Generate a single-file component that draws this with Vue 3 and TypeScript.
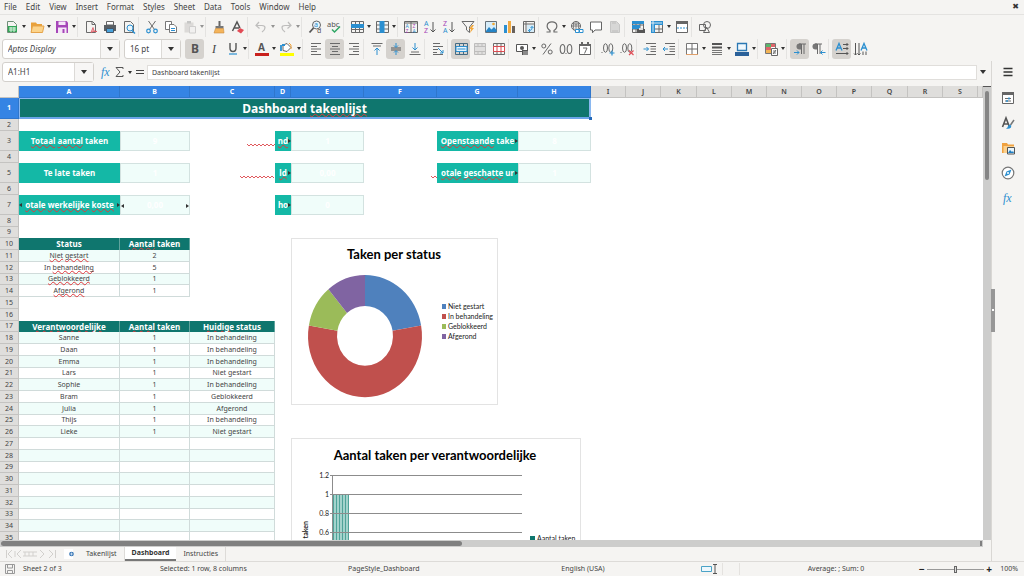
<script setup lang="ts">
import { ref } from 'vue'

interface Tool {
  id: string
  label: string
  menu?: boolean
  active?: boolean
  dim?: boolean
}
interface Cell {
  text: string
  kind: string
  spell?: boolean
  left?: boolean
  right?: boolean
  wave?: number
}

const menus = ['File', 'Edit', 'View', 'Insert', 'Format', 'Styles', 'Sheet', 'Data', 'Tools', 'Window', 'Help']

const t = (id: string, label: string, extra: Partial<Tool> = {}): Tool => ({ id, label, ...extra })
const drop = { menu: true }

const standardBar: Tool[][] = [
  [t('new', 'New', drop), t('open', 'Open', drop), t('save', 'Save', drop)],
  [t('pdf', 'Export as PDF'), t('print', 'Print'), t('preview', 'Print preview')],
  [t('cut', 'Cut'), t('copy', 'Copy'), t('paste', 'Paste', { menu: true, dim: true })],
  [t('brush', 'Clone formatting'), t('clear', 'Clear formatting')],
  [t('undo', 'Undo', { menu: true, dim: true }), t('redo', 'Redo', { menu: true, dim: true })],
  [t('find', 'Find and replace'), t('spell', 'Spelling')],
  [t('row', 'Row', drop), t('column', 'Column', drop)],
  [t('sort', 'Sort'), t('asc', 'Sort ascending'), t('desc', 'Sort descending'), t('filter', 'AutoFilter')],
  [t('image', 'Insert image'), t('chart', 'Insert chart'), t('pivot', 'Insert pivot table')],
  [t('omega', 'Special character', drop), t('link', 'Hyperlink'), t('comment', 'Comment'), t('headers', 'Headers and footers', { dim: true })],
  [t('area', 'Define print area'), t('freeze', 'Freeze rows and columns', drop), t('split', 'Split window')],
  [t('shapes', 'Draw functions')],
]

const formatBar: Tool[][] = [
  [t('bold', 'Bold', { active: true }), t('italic', 'Italic'), t('underline', 'Underline', drop)],
  [t('fontcolor', 'Font color', drop), t('highlight', 'Background color', drop)],
  [t('left', 'Align left'), t('center', 'Center', { active: true }), t('right', 'Align right')],
  [t('top', 'Align top'), t('middle', 'Center vertically', { active: true }), t('bottom', 'Align bottom')],
  [t('wrap', 'Wrap text')],
  [t('merge', 'Merge and center', { active: true }), t('mergecells', 'Merge cells', { dim: true }), t('unmerge', 'Unmerge cells')],
  [t('currency', 'Currency', drop), t('percent', 'Percent'), t('number', 'Number'), t('date', 'Date')],
  [t('adddec', 'Add decimal place'), t('deldec', 'Delete decimal place')],
  [t('indent', 'Increase indent'), t('outdent', 'Decrease indent')],
  [t('borders', 'Borders', drop), t('style', 'Border style', drop), t('bordercolor', 'Border color', drop)],
  [t('conditional', 'Conditional', drop)],
  [t('ltr', 'Left to right', { active: true }), t('rtl', 'Right to left')],
  [t('horiz', 'Text left to right', { active: true }), t('vert', 'Text top to bottom')],
]

const sideTools: Tool[] = [
  t('menu', 'Sidebar settings'),
  t('props', 'Properties'),
  t('styles', 'Styles'),
  t('gallery', 'Gallery'),
  t('navigator', 'Navigator'),
  t('fx', 'Functions'),
]

const g = '#6a6a6a'
const b = '#2b8fd0'
const line = (d: string, c = g, w = 1) => `<path d="${d}" fill="none" stroke="${c}" stroke-width="${w}"/>`
const glyph = (x: number, y: number, s: string, size: number, c = g, extra = '') =>
  `<text x="${x}" y="${y}" font-size="${size}" fill="${c}" ${extra}>${s}</text>`
const digits = `<g fill="none" stroke="${g}"><ellipse cx="4.5" cy="6" rx="2" ry="4.3"/><ellipse cx="9.8" cy="6" rx="2" ry="4.3"/></g><path d="M.5 10h1v1h-1z" fill="${g}"/>`
const page = 'M2.5 1.5H8.5L11.5 4.5V12.5H2.5Z'

const icons: Record<string, string> = {
  new: line(page, '#6f8f78') + '<path d="M3 6h9v6H3z" fill="#32a657"/><path d="M4 8h7M4 10h7M6 7v5M9 7v5" stroke="#d9f2df" fill="none"/>',
  open: '<path d="M1 2.5h5l1 1.5h5v8H1z" fill="#e9a13a"/><path d="M2.5 6H14l-1.500 6.5H1z" fill="#fcd48b" stroke="#e5a34a"/>',
  save: '<path d="M1 1h10.500L13 2.5V13H1z" fill="#a646b8"/><path d="M3.5 1.5h7V5h-7z" fill="#f5e6f8"/><path d="M3 7.5h8.500V13H3z" fill="#f5e6f8"/><path d="M7.5 9h2v4h-2z" fill="#a646b8"/>',
  pdf: line(page + 'M8 1.5V4.5H11') + '<path d="M7 12.500l2-5 1 3.500 3 .5-4 0z" fill="#f6b8bd" stroke="#dd5560" stroke-width=".8"/>',
  print: '<path d="M3.5 1.5h7V5h-7z" fill="#fff" stroke="#666"/><path d="M1 5h12v6H1z" fill="#5a5f63"/><path d="M3.5 8.5h7v4h-7z" fill="#4aa3dc" stroke="#456"/>',
  preview: line(page) + '<circle cx="8" cy="8" r="3" fill="#e7f5fd" stroke="#2b8fd0"/><path d="M10 10.500l3 3" stroke="#2b8fd0" stroke-width="1.5"/>',
  cut: line('M3.5 1L9.5 9.5M10.5 1L4.5 9.5') + '<circle cx="3.5" cy="11" r="1.8" fill="none" stroke="#2b8fd0" stroke-width="1.2"/><circle cx="10.5" cy="11" r="1.8" fill="none" stroke="#2b8fd0" stroke-width="1.2"/>',
  copy: '<path d="M1.5 1.5H7.5V9.5H1.5z" fill="#fff" stroke="#777"/><path d="M5.5 4.5H10L12.5 7V12.5H5.5z" fill="#fff" stroke="#777"/><path d="M7 8.5h4M7 10.5h4" stroke="#2b8fd0"/>',
  paste: '<path d="M1.5 2.5h9v10h-9z" fill="#c4c2bf"/><path d="M4 1h4v2.500H4z" fill="#999"/><path d="M6.5 6.5H12.5V13H6.5z" fill="#eee" stroke="#aaa"/>',
  brush: '<path d="M7.5 1v5" stroke="#666" stroke-width="2"/><path d="M3.5 6h8v2.500h-8z" fill="#777"/><path d="M3.5 8.5h8L12 13H2z" fill="#f4b45b" stroke="#c98b3c" stroke-width=".6"/>',
  clear: line('M1.5 11L6 2L9 8M3.5 8H8', '#555', 1.5) + '<path d="M6 11l3-3 4 2-3 3.500z" fill="#e24b55"/>',
  undo: line('M5 2L2 5.5L5.5 8.5M2 5.5H8C12 5.5 12 9 8 12', '#888', 1.2),
  redo: line('M9 2L12 5.5L8.5 8.5M12 5.5H6C2 5.5 2 9 6 12', '#888', 1.2),
  find: '<circle cx="8.5" cy="5" r="4" fill="#e8f5fd" stroke="#666"/><path d="M5.5 8L1.5 12.5" stroke="#555" stroke-width="1.8"/>' + glyph(6, 7, 'a', 7, b) + glyph(9, 13, 'd', 7, '#555'),
  spell: glyph(0, 6.5, 'abc', 7.5, '#555') + line('M5 9.5L7.5 12L13 6.5', '#30a765', 1.5),
  row: line('M1.5 1.5H13.5V12.5H1.5ZM1.5 9.5H13.5M5.5 1.5V12.5M9.5 1.5V12.5') + '<path d="M1 4h13v4H1z" fill="#2b8fd0"/>',
  column: line('M1.5 1.5H13.5V12.5H1.5ZM1.5 5H13.5M1.5 9H13.5') + '<path d="M4.5 1h5v12h-5z" fill="#2b8fd0"/>',
  sort: line('M.5 1.5H13.5V12.5H.5ZM.5 3H13.5M7 1.5V12.5', '#666') + glyph(1.5, 8, 'A', 5, b) + glyph(1.5, 12.5, 'Z', 5, '#a646b8') + glyph(8.5, 8, 'Z', 5, '#a646b8') + glyph(8.5, 12.5, 'A', 5, b),
  asc: glyph(1, 6, 'A', 7, b) + glyph(1, 13, 'Z', 7, '#a646b8') + line('M10 2V12M7.5 9.5L10 12L12.5 9.5', '#555'),
  desc: glyph(1, 6, 'Z', 7, '#a646b8') + glyph(1, 13, 'A', 7, b) + line('M10 2V12M7.5 9.5L10 12L12.5 9.5', '#555'),
  filter: line('M1 1.5H13L8.5 7V12.5L5.5 10V7Z') + '<path d="M11 5l-3 4h2l-1 4 4-5h-2l2-3z" fill="#f3a93d"/>',
  image: '<path d="M1.5 1.5h11v11h-11z" fill="#d7edf9" stroke="#67727a"/><path d="M2 11l3-4 2.500 2.500L10 7l2.500 3v2H2z" fill="#2584c6"/><circle cx="9.5" cy="4" r="1.3" fill="#f2a52d"/>',
  chart: '<path d="M1 5h3v8H1z" fill="#2b8fd0"/><path d="M5 1h3v12H5z" fill="#f1aa42"/><path d="M9 6h3v7H9z" fill="#69615b"/>',
  pivot: line('M1.5 1.5H12.5V12.5H1.5ZM4 1.5V12.5M1.5 4H12.5') + '<path d="M5 5h7v7H5z" fill="#d6ecf8"/>' + line('M6.5 10.5C10 10.5 10 9 10 6.5M8.5 8L10 6.5L11.5 8M8 9L6.5 10.5L8 12', b),
  omega: line('M1.5 12H5V10.5C.5 7.5 1.5 1.8 7 1.8S13.5 7.5 9 10.5V12H12.5', g, 1.2),
  link: '<circle cx="6" cy="6" r="4.5" fill="none" stroke="#666"/>' + line('M1.5 6H10.5M6 1.5V10.5M2.5 3.5Q6 5 9.5 3.5M4 2Q2.5 6 4 10M8 2Q9.5 6 8 10', g, 0.8) + '<path d="M5.5 9.5h3.500v3H5.5zM9.5 9.5H13v3H9.5z" fill="#fff" stroke="#2b8fd0"/>',
  comment: '<path d="M1.5 2H12.5V10H6L3.5 12.8V10H1.5z" fill="#fff" stroke="#666"/>',
  headers: '<path d="M2.5 1.5H8.5L11.5 4.5V12.5H2.5z" fill="#bbb" stroke="#999"/><path d="M4 3h4M4 11h6" stroke="#888"/>',
  area: line('M1.5 1.5H12.5V12.5H1.5ZM1.5 5H12.5M1.5 9H12.5M5 1.5V12.5M9 1.5V12.5') + '<path d="M1 1h12v3H1zM1 5h8v4H1z" fill="#2b8fd0"/><path d="M6 9h8v4H6z" fill="#555"/><path d="M8 8h4v2H8z" fill="#ddd"/>',
  freeze: line('M1.5 1.5H12.5V12.5H1.5ZM1.5 9H12.5M9 1.5V12.5') + '<path d="M1 1h12v4H1zM1 5h4v8H1z" fill="#2b8fd0"/><path d="M3 1v11M1 3h11" stroke="#fff" stroke-width=".8"/>',
  split: '<path d="M1.5 1.5h11v11h-11z" fill="#fff" stroke="#666"/><path d="M1 1h12v3H1z" fill="#666"/><path d="M2 8h10" stroke="#2b8fd0" stroke-dasharray="2 1"/>',
  shapes: '<path d="M1.5 4.5h6v6h-6z" fill="#f5f4f2" stroke="#666"/><circle cx="9" cy="5" r="3.5" fill="none" stroke="#666"/><path d="M5.5 12.5L8.5 7L11.5 12.5z" fill="none" stroke="#666"/>',
  bold: glyph(3, 11, 'B', 12, '#555', 'font-weight="700"'),
  italic: glyph(5, 11, 'I', 12, '#444', 'font-style="italic" font-family="Liberation Serif, serif"'),
  underline: line('M4 1V6Q4 9.5 7 9.5T10 6V1', '#555', 1.4) + line('M3 12H11', b, 1.2),
  fontcolor: glyph(3, 9, 'A', 10, '#555', 'font-weight="700"') + '<path d="M0 11h14v3H0z" fill="#c9211e"/>',
  highlight: '<path d="M3 3l4-1.500 4 4-4 4-4-1z" fill="#fff" stroke="#666"/><path d="M1 3v6M2 3h3" stroke="#2b8fd0" stroke-width="1.8"/><path d="M9 1q3 1 2 6" fill="none" stroke="#f0a33b"/><path d="M0 11h14v3H0z" fill="#ffff00"/>',
  left: line('M2 1.5H12M2 4.5H8M2 7H12M2 9.5H8M2 12.5H12'),
  center: line('M2 1.5H12M4 4.5H10M2 7H12M4 9.5H10M2 12.5H12'),
  right: line('M2 1.5H12M6 4.5H12M2 7H12M6 9.5H12M2 12.5H12'),
  top: line('M1.5 1.5H12.5M3 4H11') + line('M7 13V6M4.5 8.5L7 6L9.5 8.5', b),
  middle: line('M2 6H12M2 8H12', '#555') + line('M7 1V5M7 13V9M5 3.5L7 5.5L9 3.5M5 10.5L7 8.5L9 10.5', b),
  bottom: line('M3 10H11M1.5 12.5H12.5') + line('M7 1V8M4.5 5.5L7 8L9.5 5.5', b),
  wrap: line('M2 1.5H9M2 4.5H12M2 7.5H7M2 10.5H6M2 12.5H12') + line('M7 6L12 11M12 8V11H9', b),
  merge: line('M1.5 1.5H13.5V12.5H1.5ZM5.5 1.5V12.5M9.5 1.5V12.5', '#456b83') + '<path d="M2 4.5h11v5H2z" fill="#e8f5fd" stroke="#2b8fd0"/>' + line('M3.5 7H11.5', b),
  mergecells: '<path d="M1.5 1.5h11v11h-11z" fill="#ccc" stroke="#888"/>' + line('M1.5 4.5H12.5M1.5 9.5H12.5M5 1.5V4.5M9 1.5V4.5M5 9.5V12.5M9 9.5V12.5', '#888'),
  unmerge: line('M1.5 1.5H12.5V12.5H1.5ZM5 1.5V12.5M9 1.5V12.5') + '<path d="M1.5 4.5h11v5h-11z" fill="#fff" stroke="#d84a50"/>' + line('M5 4.5V9.5M9 4.5V9.5', '#d84a50'),
  currency: '<path d="M1.5 2.5h11v7h-11z" fill="#fff" stroke="#555"/><circle cx="7" cy="6" r="2" fill="#555"/><path d="M7 8h6v5H7z" fill="#555"/><path d="M8 10h5M8 12h5" stroke="#eee" stroke-width=".7"/>',
  percent: '<circle cx="3.8" cy="4" r="2" fill="none" stroke="#666"/><circle cx="10.2" cy="10" r="2" fill="none" stroke="#666"/>' + line('M11 1.5L3 12.5'),
  number: `<g fill="none" stroke="${g}" stroke-width="1.1"><ellipse cx="3.5" cy="7" rx="2.3" ry="4.5"/><ellipse cx="10.5" cy="7" rx="2.3" ry="4.5"/></g><path d="M6.5 11h1v1h-1z" fill="${g}"/>`,
  date: '<path d="M1.5 2.5h11v10h-11z" fill="#fff" stroke="#666"/><path d="M1 2h12v2H1zM3 0h2v3H3zM9 0h2v3H9z" fill="#666"/>' + line('M5 6H9L6.5 11.5'),
  adddec: digits + line('M8.5 11H13.5M11 8.5V13.5', b, 1.2),
  deldec: digits + line('M9 8.5L13.5 13M13.5 8.5L9 13', '#e0505a', 1.2),
  indent: line('M3 1.5H13M7.5 4.5H13M7.5 7H13M7.5 9.5H13M3 12.5H13') + line('M.5 7H5.5M3.5 5L5.5 7L3.5 9', b),
  outdent: line('M3 1.5H13M7.5 4.5H13M7.5 7H13M7.5 9.5H13M3 12.5H13') + line('M6 7H1M3 5L1 7L3 9', b),
  borders: '<path d="M1.5 1.5h11v11h-11z" fill="#fff" stroke="#777"/>' + line('M7 1.5V12.5M1.5 7H12.5') + line('M1 12.5H13', '#e0a06b'),
  style: line('M2 2H12', '#555', 2) + line('M2 5.5H12', '#555', 2) + line('M2 8.5H12', '#777') + line('M2 10.5H12', '#777') + line('M2 12.5H12', '#777'),
  bordercolor: '<path d="M2.5 1.5h9v7h-9z" fill="#f0f8fd" stroke="#2b78b4" stroke-width="1.3"/><path d="M0 10h14v4H0z" fill="#2a6099"/>',
  conditional: '<path d="M1.5 1.5h10v10h-10z" fill="#fff" stroke="#777"/><path d="M2 2h5v3H2z" fill="#5ab56c"/><path d="M2 5h5v3H2z" fill="#e0646a"/><path d="M2 8h5v3H2z" fill="#f2b456"/><path d="M7 2h4v3H7z" fill="#e0646a"/><path d="M7.5 6.5h6v7h-6z" fill="#fff" stroke="#666"/>' + line('M9 9H12M9 11H12M12 8L9 12', '#555', 0.8),
  ltr: '<path d="M8 1.5H6.5a3 3 0 000 6H8z" fill="#777"/>' + line('M8.5 12V2M11 12V2M6 2H13') + line('M1 10.5H6M4 8.5L6 10.5L4 12.5', b),
  rtl: '<path d="M5 1.5H3.5a3 3 0 000 6H5z" fill="#777"/>' + line('M5.5 12V2M8 12V2M3 2H10') + line('M13.5 10.5H8.5M10.5 8.5L8.5 10.5L10.5 12.5', b),
  horiz: line('M1 8.5L4 1.5L7 8.5M2 6H6', b, 1.3) + line('M8 2.5H13M8 6.5H13M1 11.5H13M11.5 1L13 2.5L11.5 4M11.5 5L13 6.5L11.5 8M11.5 10L13 11.5L11.5 13', '#555'),
  vert: line('M7 8.5L10 1.5L13 8.5M8 6H12', b, 1.3) + line('M1.5 1V13M5 1V13M9 9.5V13M12 9.5V13M0 11.5L1.5 13L3 11.5M3.5 11.5L5 13L6.5 11.5', '#555'),
  menu: line('M2.5 3.5H11.5M2.5 7H11.5M2.5 10.5H11.5', '#333', 1.5),
  props: '<path d="M1.5 2.5h11v10h-11z" fill="#fff" stroke="#666"/><path d="M1 1h12v3H1z" fill="#666"/>' + line('M4 7.5H10M4 10H10') + line('M8 6.5V8.5M6 9V11', b, 1.5),
  styles: line('M1.5 11L5 2L8.5 11M3 8H7.5', '#555', 1.6) + line('M13 4L9.5 9', '#777', 1.5) + '<path d="M9 8.500q2 1 1 3-2 2-5 1 2-1 2-2.500z" fill="#2b8fd0"/>',
  gallery: '<path d="M1 2h5l1 1.500h6V12H1z" fill="#f0a13f"/><path d="M2.5 5H13v7H2.5z" fill="#fbd08d"/><path d="M6.5 6.5h7v6.500h-7z" fill="#e8f4fb" stroke="#555"/><path d="M7 12l2-3 2 2 1-1 1 2z" fill="#1f7fc4"/>',
  navigator: '<circle cx="7" cy="7" r="5.8" fill="#fff" stroke="#777" stroke-width="1.2"/><path d="M10.5 3.5L8.5 8.5L3.5 10.5L5.5 5.5z" fill="#2b8fd0"/><circle cx="7" cy="7" r="1" fill="#fff"/>',
  fx: glyph(2, 11, 'fx', 12, b, 'font-style="italic" font-family="Liberation Serif, serif"'),
}

const fontName = ref('Aptos Display')
const fontSize = ref('16 pt')
const cellRef = ref('A1:H1')
const formula = ref('Dashboard takenlijst')
const zoom = ref(50)

const columns: [string, number][] = [
  ['A', 101], ['B', 70], ['C', 85], ['D', 16], ['E', 73], ['F', 73], ['G', 81], ['H', 73],
  ['I', 35], ['J', 35], ['K', 36], ['L', 35], ['M', 35], ['N', 35], ['O', 35], ['P', 35], ['Q', 36], ['R', 35], ['S', 35],
]

const statuses: [string, number][] = [['Niet gestart', 2], ['In behandeling', 5], ['Geblokkeerd', 1], ['Afgerond', 1]]
const people: [string, string][] = [
  ['Sanne', 'In behandeling'], ['Daan', 'In behandeling'], ['Emma', 'In behandeling'], ['Lars', 'Niet gestart'],
  ['Sophie', 'In behandeling'], ['Bram', 'Geblokkeerd'], ['Julia', 'Afgerond'], ['Thijs', 'In behandeling'], ['Lieke', 'Niet gestart'],
]

const cells: Record<string, Cell> = {
  A3: { text: 'Totaal aantal taken', kind: 'kpi', spell: true },
  B3: { text: '9', kind: 'value' },
  C3: { text: '', kind: 'spill', wave: 28 },
  D3: { text: 'nd', kind: 'kpi', spell: true, right: true },
  E3: { text: '1', kind: 'value' },
  G3: { text: 'Openstaande take', kind: 'kpi', spell: true, right: true },
  H3: { text: '8', kind: 'value' },
  A5: { text: 'Te late taken', kind: 'kpi' },
  B5: { text: '1', kind: 'value' },
  C5: { text: '', kind: 'spill', wave: 35 },
  D5: { text: 'ld', kind: 'kpi', spell: true, right: true },
  E5: { text: '0,00', kind: 'value' },
  F5: { text: '', kind: 'spill', wave: 6 },
  G5: { text: 'otale geschatte ur', kind: 'kpi', spell: true, right: true },
  H5: { text: '1', kind: 'value' },
  A7: { text: 'otale werkelijke koste', kind: 'kpi', spell: true, left: true, right: true },
  B7: { text: '0,00', kind: 'value', left: true, right: true },
  D7: { text: 'ho', kind: 'kpi', right: true },
  E7: { text: '0', kind: 'value' },
  A10: { text: 'Status', kind: 'head' },
  B10: { text: 'Aantal taken', kind: 'head', spell: true },
  A17: { text: 'Verantwoordelijke', kind: 'head', spell: true },
  B17: { text: 'Aantal taken', kind: 'head', spell: true },
  C17: { text: 'Huidige status', kind: 'head', spell: true },
}
statuses.forEach(([name, count], i) => {
  const kind = i % 2 ? 'data' : 'data band'
  cells[`A${11 + i}`] = { text: name, kind, spell: true }
  cells[`B${11 + i}`] = { text: String(count), kind }
})
for (let i = 0; i < 18; i++) {
  const kind = i % 2 ? 'data' : 'data band'
  const p = people[i]
  cells[`A${18 + i}`] = { text: p ? p[0] : '', kind }
  cells[`B${18 + i}`] = { text: p ? '1' : '', kind }
  cells[`C${18 + i}`] = { text: p ? p[1] : '', kind }
}
const blank: Cell = { text: '', kind: '' }
const known = new Set(['In', 'taken', 'take', 'status', 'ur', 'Dashboard'])

const words = (c: Cell) =>
  c.text.split(' ').map((w, i) => ({ gap: i > 0 ? ' ' : '', word: w, typo: !!c.spell && !known.has(w) }))

const rowClass = (n: number) => {
  if (n === 1) return 'r-title'
  if (n === 3 || n === 5 || n === 7) return 'r-kpi'
  return n > 8 && n % 4 === 1 ? 'r-short' : 'r-plain'
}
const rows = Array.from({ length: 35 }, (_, i) => {
  const n = i + 1
  return { n, cls: rowClass(n), cells: n === 1 ? [] : 'ABCDEFGH'.split('').map((c) => cells[c + n] ?? blank) }
})

const wavePath = (w: number) => {
  let d = 'M0 1'
  for (let x = 2; x <= w; x += 2) d += `L${x} ${x % 4 ? 3 : 1}`
  return d
}

const colors = ['#4f81bd', '#c0504d', '#9bbb59', '#8064a2']
const total = statuses.reduce((s, x) => s + x[1], 0)
let turned = 0
const slices = statuses.map(([name, count], i) => {
  const a0 = (turned / total) * Math.PI * 2
  turned += count
  const a1 = (turned / total) * Math.PI * 2
  const at = (a: number, rx: number, ry: number) => `${(73 + rx * Math.sin(a)).toFixed(1)} ${(97 - ry * Math.cos(a)).toFixed(1)}`
  const big = a1 - a0 > Math.PI ? 1 : 0
  const d = `M${at(a0, 57, 61)}A57 61 0 ${big} 1 ${at(a1, 57, 61)}L${at(a1, 28, 30)}A28 30 0 ${big} 0 ${at(a0, 28, 30)}Z`
  return { name, d, color: colors[i] }
})
const ticks = ['1.2', '1', '0.8', '0.6']
</script>

<template>
  <div class="app">
    <nav class="menubar" aria-label="Menu">
      <button v-for="m in menus" :key="m" type="button">{{ m }}</button>
      <button type="button" class="close" aria-label="Close document">✖</button>
    </nav>

    <div class="toolbar" role="toolbar" aria-label="Standard">
      <div v-for="(group, gi) in standardBar" :key="gi" class="group">
        <template v-for="tool in group" :key="tool.id">
          <button type="button" class="tool" :class="{ dim: tool.dim }" :aria-label="tool.label">
            <svg viewBox="0 0 14 14" v-html="icons[tool.id]"></svg>
          </button>
          <button v-if="tool.menu" type="button" class="more" :class="{ dim: tool.dim }" :aria-label="tool.label + ' options'"></button>
        </template>
      </div>
    </div>

    <div class="toolbar format" role="toolbar" aria-label="Formatting">
      <div class="combo font">
        <input v-model="fontName" type="text" aria-label="Font name" />
        <button type="button" aria-label="Font list"></button>
      </div>
      <div class="combo size">
        <input v-model="fontSize" type="text" aria-label="Font size" />
        <button type="button" aria-label="Size list"></button>
      </div>
      <div v-for="(group, gi) in formatBar" :key="gi" class="group">
        <template v-for="tool in group" :key="tool.id">
          <button type="button" class="tool" :class="{ dim: tool.dim, active: tool.active }" :aria-label="tool.label">
            <svg viewBox="0 0 14 14" v-html="icons[tool.id]"></svg>
          </button>
          <button v-if="tool.menu" type="button" class="more" :aria-label="tool.label + ' options'"></button>
        </template>
      </div>
    </div>

    <div class="body">
      <main class="document">
        <div class="formulabar">
          <div class="combo name">
            <input v-model="cellRef" type="text" aria-label="Name box" />
            <button type="button" aria-label="Named ranges"></button>
          </div>
          <button type="button" class="fn" aria-label="Function wizard">
            <svg viewBox="0 0 14 14" v-html="icons.fx"></svg>
          </button>
          <button type="button" class="fn sum" aria-label="Select function">
            <svg viewBox="0 0 14 14"><path d="M10 4V2.500H3L7 7L3 11.500H10V10" fill="none" stroke="#555" /></svg>
          </button>
          <button type="button" class="more" aria-label="Function list"></button>
          <button type="button" class="fn equals" aria-label="Formula">
            <svg viewBox="0 0 14 14"><path d="M3 5.500H11M3 8.500H11" stroke="#444" stroke-width="1.2" /></svg>
          </button>
          <input v-model="formula" class="formula" type="text" aria-label="Formula input" />
          <button type="button" class="expand" aria-label="Expand formula bar"></button>
        </div>

        <div class="gridrow">
          <div class="viewport">
            <table class="sheet">
              <colgroup>
                <col class="c-row" />
                <col v-for="c in columns" :key="c[0]" :style="{ width: c[1] + 'px' }" />
                <col />
              </colgroup>
              <thead>
                <tr>
                  <th class="corner"></th>
                  <th v-for="(c, i) in columns" :key="c[0]" scope="col" :class="{ sel: i < 8 }">{{ c[0] }}</th>
                  <th></th>
                </tr>
              </thead>
              <tbody>
                <tr v-for="r in rows" :key="r.n" :class="r.cls">
                  <th scope="row" :class="{ sel: r.n === 1 }">{{ r.n }}</th>
                  <td v-if="r.n === 1" colspan="8" class="title">
                    Dashboard <span class="typo">takenlijst</span><i class="handle"></i>
                  </td>
                  <td v-for="(c, i) in r.cells" :key="i" :class="c.kind">
                    <div v-if="c.text" class="words">
                      <template v-for="(w, wi) in words(c)" :key="wi">{{ w.gap }}<span :class="{ typo: w.typo }">{{ w.word }}</span></template>
                    </div>
                    <svg v-if="c.wave" class="wave" :width="c.wave" height="4"><path :d="wavePath(c.wave)" /></svg>
                    <i v-if="c.left" class="mark ml"></i>
                    <i v-if="c.right" class="mark mr"></i>
                  </td>
                  <td :colspan="columns.length - 7"></td>
                </tr>
              </tbody>
            </table>

            <svg class="graph pie" viewBox="0 0 205 165" role="img" aria-label="Taken per status">
              <text class="gtitle" x="102" y="20">Taken per status</text>
              <path v-for="s in slices" :key="s.name" :d="s.d" :fill="s.color" />
              <g v-for="(s, i) in slices" :key="s.name">
                <rect x="150" :y="65 + i * 10" width="4" height="5" :fill="s.color" />
                <text x="156" :y="70 + i * 10">{{ s.name }}</text>
              </g>
            </svg>

            <svg class="graph bars" viewBox="0 0 288 148" role="img" aria-label="Aantal taken per verantwoordelijke">
              <text class="gtitle" x="143" y="21">Aantal taken per verantwoordelijke</text>
              <rect x="40" y="56" width="17" height="92" fill="#a3d3cc" />
              <path d="M41.500 56V148M44.500 56V148M47.500 56V148M50.500 56V148M53.500 56V148M56.500 56V148" stroke="#4fa399" />
              <g v-for="(k, i) in ticks" :key="k">
                <path :d="`M38 ${36.5 + i * 19}H230`" stroke="#8c8c8c" />
                <text class="tick" x="37" :y="39 + i * 19">{{ k }}</text>
              </g>
              <path d="M40.500 36V148" stroke="#8c8c8c" />
              <text class="axis" transform="translate(16 82) rotate(-90)">Aantal taken</text>
              <rect x="238" y="97" width="5" height="5" fill="#0f766e" />
              <text x="245" y="102">Aantal taken</text>
            </svg>
          </div>
          <div class="vscroll"><i></i></div>
        </div>
        <div class="hscroll"><i></i><b></b></div>

        <div class="tabs">
          <svg class="nav" viewBox="0 0 52 12" aria-hidden="true">
            <path d="M1.500 2V10M7 2L3 6L7 10M10 3V9M16 2L12 6L16 10M18 4H32M18 8H32M20 4V8M24 4V8M28 4V8M35 2L39 6L35 10M44 2L48 6L44 10M50.500 2V10" />
          </svg>
          <button type="button" class="add" aria-label="Add sheet">
            <svg viewBox="0 0 12 12"><path d="M1 1H10V11H1z" fill="#fff" /><circle cx="8.500" cy="6" r="2.300" fill="#3173b5" /><path d="M8.500 4.500V7.500M7 6H10" stroke="#fff" stroke-width=".6" /></svg>
          </button>
          <button type="button" class="tab">Takenlijst</button>
          <button type="button" class="tab current">Dashboard</button>
          <button type="button" class="tab">Instructies</button>
        </div>
      </main>

      <aside class="sidebar" aria-label="Sidebar">
        <button v-for="s in sideTools" :key="s.id" type="button" :aria-label="s.label">
          <svg viewBox="0 0 14 14" v-html="icons[s.id]"></svg>
        </button>
        <i class="grip"></i>
      </aside>
    </div>

    <footer class="status">
      <span class="disk">
        <svg viewBox="0 0 14 14"><path d="M2.500 2.500H11.500V11.500H2.500ZM4.500 2.500V6H9.500V2.500M4.500 11.500V8.500H9.500V11.500" fill="none" stroke="#999" /></svg>
      </span>
      <span>Sheet 2 of 3</span>
      <span>Selected: 1 row, 8 columns</span>
      <span>PageStyle_Dashboard</span>
      <span class="mid">English (USA)</span>
      <span></span>
      <span class="mode">
        <svg viewBox="0 0 24 12"><path d="M3.500 3.500H13.500V8.500H3.500z" fill="#eef8fd" stroke="#4ba3c7" /><path d="M15 1.500H19M15 10.500H19M17 1.500V10.500" fill="none" stroke="#555" /></svg>
      </span>
      <span class="cell"></span>
      <span class="cell"></span>
      <span class="mid">Average: ; Sum: 0</span>
      <span class="zoom">
        <button type="button" aria-label="Zoom out">−</button>
        <input v-model="zoom" type="range" min="0" max="100" aria-label="Zoom" />
        <button type="button" aria-label="Zoom in">+</button>
        <span class="pct">100%</span>
      </span>
    </footer>
  </div>
</template>

<style>
html,
body {
  margin: 0;
  overflow: hidden;
}
</style>

<style scoped>
.app {
  display: flex;
  flex-direction: column;
  height: 100vh;
  overflow: hidden;
  background: #f5f4f2;
  color: #444;
  font: 7px/10px 'Noto Sans', 'Open Sans', sans-serif;
}
.app * {
  box-sizing: border-box;
}
button,
input {
  margin: 0;
  padding: 0;
  border: 0;
  background: none;
  color: inherit;
  font: inherit;
}
svg {
  display: block;
  flex: none;
  overflow: visible;
}
.menubar {
  display: flex;
  flex: none;
  gap: 9px;
  height: 15px;
  padding: 0 4px;
  border-bottom: 1px solid #e4e3e1;
  font-size: 8px;
  align-items: center;
}
.close {
  margin-left: auto;
  margin-right: 1px;
  color: #333;
  font-family: 'DejaVu Sans', sans-serif;
}
.toolbar {
  display: flex;
  flex: none;
  align-items: center;
  height: 23px;
  padding-left: 2px;
}
.format {
  padding-bottom: 2px;
}
.group {
  display: flex;
  align-items: center;
  margin-right: 3px;
  border-right: 1px solid #e4e3e1;
}
.group:last-child {
  border-right: 0;
}
.tool {
  display: flex;
  width: 19px;
  height: 20px;
  align-items: center;
  justify-content: center;
  border-radius: 3px;
}
.tool svg,
.sidebar svg,
.fn svg {
  width: 14px;
  height: 14px;
}
.tool.active {
  background: #d5d2ce;
}
.dim {
  opacity: 0.5;
}
.more {
  display: flex;
  width: 6px;
  height: 20px;
  align-items: center;
  justify-content: center;
}
.more::after {
  border: 2px solid transparent;
  border-top: 3px solid #333;
  border-bottom: 0;
  content: '';
}
.combo {
  display: flex;
  flex: none;
  height: 20px;
  border: 1px solid #d3d0cc;
  border-radius: 3px;
  background: #fff;
  font-size: 8px;
}
.combo input {
  flex: 1;
  min-width: 0;
  padding-left: 5px;
}
.combo button {
  display: flex;
  width: 19px;
  align-items: center;
  justify-content: center;
  border-left: 1px solid #dcdad7;
  background: #f7f6f5;
}
.combo button::after,
.expand::after {
  border: 3px solid transparent;
  border-top: 4px solid #333;
  border-bottom: 0;
  content: '';
}
.font {
  width: 118px;
  margin-right: 4px;
}
.font input {
  font-style: italic;
}
.size {
  width: 57px;
  margin-right: 4px;
}
.name {
  width: 92px;
  margin-right: 5px;
}
.body {
  display: flex;
  flex: 1;
  min-height: 0;
}
.document {
  display: flex;
  flex: 1;
  flex-direction: column;
  min-width: 0;
}
.formulabar {
  display: flex;
  flex: none;
  align-items: center;
  height: 25px;
  padding: 0 3px 3px 2px;
}
.fn {
  display: flex;
  width: 14px;
  align-items: center;
  justify-content: center;
}
.equals {
  width: 14px;
}
.formula {
  flex: 1;
  height: 15px;
  min-width: 0;
  padding-left: 4px;
  border: 1px solid #e0dedb;
  background: #fff;
}
.expand {
  display: flex;
  width: 11px;
  height: 15px;
  align-items: center;
  justify-content: center;
}
.gridrow {
  display: flex;
  flex: 1;
  min-height: 0;
}
.viewport {
  position: relative;
  flex: 1;
  min-width: 0;
  overflow: hidden;
  background: #fff;
}
.sheet {
  width: 100%;
  border-spacing: 0;
  table-layout: fixed;
  line-height: 10px;
  text-align: center;
}
.sheet th,
.sheet td {
  padding: 0;
  white-space: nowrap;
}
.c-row {
  width: 19px;
}
.sheet th {
  border-right: 1px solid #c4c3c1;
  border-bottom: 1px solid #c4c3c1;
  background: #dfdedc;
  font-weight: 400;
}
.sheet thead th {
  height: 12px;
  font-weight: 600;
}
.sheet th.corner {
  background: #f5f4f2;
}
.sheet th.sel {
  border-color: #2f76cc;
  background: #3584e4;
  color: #fff;
  font-weight: 700;
}
.r-title {
  height: 21px;
}
.r-kpi {
  height: 20px;
}
.r-plain {
  height: 12px;
}
.r-short {
  height: 11px;
}
.sheet td {
  position: relative;
}
.sheet .title {
  border: 1px solid #8ab8f0;
  border-right-width: 2px;
  border-bottom: 2px solid #6ba5ea;
  background: #0f766e;
  color: #fff;
  font-size: 12px;
  font-weight: 700;
  line-height: 17px;
}
.handle {
  position: absolute;
  right: -3px;
  bottom: -3px;
  width: 3px;
  height: 3px;
  background: #2468b8;
}
.words {
  white-space: pre;
}
.typo {
  text-decoration: underline wavy #e0383c 1px;
  text-decoration-skip-ink: none;
  text-underline-offset: 0;
}
.kpi {
  background: #14b8a6;
  color: #fff;
  font-size: 8px;
  font-weight: 700;
}
.value {
  border: 1px solid #d3e2e0;
  background: #f0fdfa;
  color: #fff;
  font-size: 8px;
  font-weight: 700;
}
.head {
  border-right: 1px solid #5fa39d;
  background: #0f766e;
  color: #fff;
  font-size: 8px;
  font-weight: 700;
}
.data {
  border-right: 1px solid #d0dbda;
  border-bottom: 1px solid #d0dbda;
}
.band {
  background: #f0fdfa;
}
.wave {
  position: absolute;
  right: 0;
  bottom: 4px;
}
.wave path {
  fill: none;
  stroke: #e0585c;
}
.mark {
  position: absolute;
  top: 8px;
  border: 2px solid transparent;
}
.ml {
  left: 0;
  border-right: 3px solid #333;
  border-left: 0;
}
.mr {
  right: 0;
  border-left: 3px solid #333;
  border-right: 0;
}
.graph {
  position: absolute;
  left: 291px;
  overflow: hidden;
  border: 1px solid #e3e3e3;
  background: #fff;
  fill: #222;
  font: 7px Lato, 'Open Sans', sans-serif;
}
.pie {
  top: 152px;
  width: 207px;
  height: 167px;
}
.bars {
  top: 352px;
  width: 290px;
  height: 150px;
}
.gtitle {
  fill: #000;
  font-size: 13px;
  font-weight: 700;
  text-anchor: middle;
}
.tick {
  text-anchor: end;
}
.axis {
  font-weight: 700;
  text-anchor: end;
}
.vscroll {
  flex: none;
  width: 8px;
  padding: 4px 2px;
  border-top: 1px solid #555;
  background: #cdcdcc;
}
.vscroll i {
  display: block;
  height: 20%;
  border-radius: 2px;
  background: #858585;
}
.hscroll {
  display: flex;
  flex: none;
  justify-content: space-between;
  height: 7px;
  margin-right: 8px;
  padding: 1px;
  background: #cdcdcc;
}
.hscroll i {
  width: 47%;
  border-radius: 3px;
  background: #808080;
}
.hscroll b {
  width: 2px;
  background: #808080;
}
.tabs {
  display: flex;
  flex: none;
  align-items: center;
  height: 14px;
  padding-left: 5px;
}
.nav {
  width: 52px;
  height: 12px;
  fill: none;
  stroke: #d2d0cd;
}
.add {
  width: 12px;
  margin: 0 4px 0 6px;
}
.add svg {
  width: 12px;
  height: 12px;
}
.tab {
  height: 14px;
  padding: 0 7px;
  border-right: 1px solid #dddbd8;
}
.tab.current {
  border-right: 0;
  border-bottom: 2px solid #777;
  background: #fff;
  color: #333;
  font-weight: 700;
}
.sidebar {
  position: relative;
  display: flex;
  flex: none;
  flex-direction: column;
  gap: 5px;
  width: 33px;
  border-left: 1px solid #d9d7d4;
  align-items: center;
}
.sidebar button {
  display: flex;
  width: 20px;
  height: 20px;
  align-items: center;
  justify-content: center;
}
.sidebar button:first-child {
  height: 22px;
}
.grip {
  position: absolute;
  top: 228px;
  left: -1px;
  width: 4px;
  height: 43px;
  background: #979797;
}
.grip::after {
  position: absolute;
  top: 20px;
  left: 1px;
  width: 2px;
  height: 2px;
  background: #fff;
  content: '';
}
.status {
  display: grid;
  flex: none;
  grid-template-columns: 20fr 137fr 188fr 164fr 148fr 38fr 27fr 17fr 16fr 162fr 107fr;
  height: 15px;
  border-top: 1px solid #dddbd8;
  align-items: center;
  white-space: nowrap;
}
.status > span {
  min-width: 0;
  padding-left: 3px;
}
.disk svg {
  width: 14px;
  height: 14px;
}
.mode svg {
  width: 24px;
  height: 12px;
}
.status .cell {
  height: 12px;
  border-left: 1px solid #e4e2df;
}
.status .mid {
  padding: 0;
  text-align: center;
}
.status .zoom {
  display: flex;
  padding: 0;
  align-items: center;
}
.zoom button {
  width: 10px;
  color: #222;
  font-size: 10px;
  font-weight: 700;
}
.zoom input {
  flex: 1;
  height: 10px;
  min-width: 0;
  appearance: none;
}
.zoom input::-webkit-slider-runnable-track {
  height: 1px;
  background: #999;
}
.zoom input::-webkit-slider-thumb {
  width: 3px;
  height: 7px;
  margin-top: -3px;
  border: 1px solid #666;
  background: #ddd;
  appearance: none;
}
.pct {
  padding: 0 6px;
}
</style>
